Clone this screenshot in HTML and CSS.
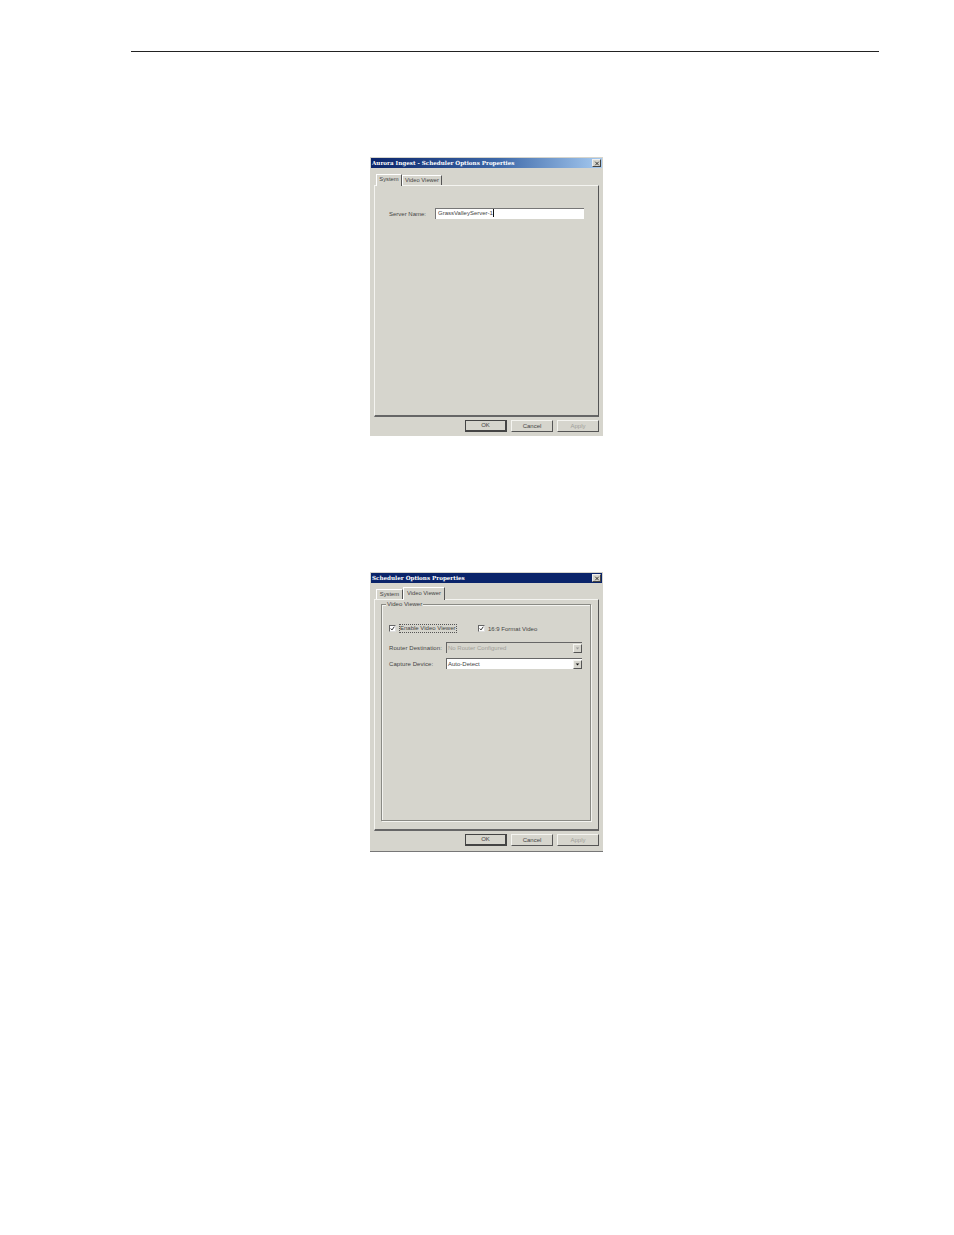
FILE: index.html
```html
<!DOCTYPE html>
<html lang="en">
<head>
<meta charset="utf-8">
<title>Scheduler Options Properties</title>
<link rel="stylesheet" href="styles.css">
</head>
<body>
<div class="rule"></div>

<section class="dialog first">
  <div class="titlebar gradient">
    <span class="title">Aurora Ingest - Scheduler Options Properties</span>
    <span class="close"><svg viewBox="0 0 8 7" width="8" height="7"><path d="M1.5 1 6.5 6M6.5 1 1.5 6" stroke="#222" stroke-width="1.2" fill="none"/></svg></span>
  </div>
  <div class="tabs tabs-a">
    <span class="tab active w-sys">System</span>
    <span class="tab w-vid">Video Viewer</span>
  </div>
  <div class="panel">
    <div class="server-row">
      <span class="label server-label">Server Name:</span>
      <span class="input server-input">GrassValleyServer-1<i class="caret"></i></span>
    </div>
  </div>
  <div class="buttons">
    <span class="btn default">OK</span>
    <span class="btn">Cancel</span>
    <span class="btn disabled">Apply</span>
  </div>
</section>

<section class="dialog second">
  <div class="titlebar navy">
    <span class="title">Scheduler Options Properties</span>
    <span class="close"><svg viewBox="0 0 8 7" width="8" height="7"><path d="M1.5 1 6.5 6M6.5 1 1.5 6" stroke="#222" stroke-width="1.2" fill="none"/></svg></span>
  </div>
  <div class="tabs tabs-b">
    <span class="tab w-sys2">System</span>
    <span class="tab active w-vid2">Video Viewer</span>
  </div>
  <div class="panel panel-b">
    <div class="group">
      <span class="legend">Video Viewer</span>
      <div class="checks">
        <span class="check focus"><i class="box"><svg viewBox="0 0 7 7" width="6" height="6"><path d="M1 3.5 2.8 5.5 6 1" stroke="#111" stroke-width="1.2" fill="none"/></svg></i><span class="focus-text">Enable Video Viewer</span></span>
        <span class="check"><i class="box"><svg viewBox="0 0 7 7" width="6" height="6"><path d="M1 3.5 2.8 5.5 6 1" stroke="#111" stroke-width="1.2" fill="none"/></svg></i>16:9 Format Video</span>
      </div>
      <div class="field">
        <span class="label field-label">Router Destination:</span>
        <span class="combo off"><span class="combo-text">No Router Configured</span><i class="arrow"><svg viewBox="0 0 7 4" width="6" height="4"><path d="M1 .5H6L3.5 3.5Z" fill="#999"/></svg></i></span>
      </div>
      <div class="field field-2">
        <span class="label field-label">Capture Device:</span>
        <span class="combo"><span class="combo-text">Auto-Detect</span><i class="arrow"><svg viewBox="0 0 7 4" width="6" height="4"><path d="M1 .5H6L3.5 3.5Z" fill="#111"/></svg></i></span>
      </div>
    </div>
  </div>
  <div class="buttons">
    <span class="btn default">OK</span>
    <span class="btn">Cancel</span>
    <span class="btn disabled">Apply</span>
  </div>
</section>
</body>
</html>
```
FILE: styles.css
```css
* { box-sizing: border-box; }
html, body { margin: 0; padding: 0; background: #fff; }
body {
  width: 954px;
  height: 1235px;
  overflow: hidden;
  font-family: "Liberation Sans", Arial, sans-serif;
  font-size: 6px;
  color: #444;
}
.rule { height: 1px; margin: 51px 75px 0 131px; background: #222; }

.dialog {
  width: 233px;
  margin-left: 370px;
  background: #d6d5cd;
  padding: 1px 0 0;
  display: flex;
  flex-direction: column;
}
.first { margin-top: 105px; height: 279px; }
.second { margin-top: 136px; height: 280px; border-bottom: 1px solid #777; }

.titlebar {
  height: 10px;
  margin: 0 1px;
  display: flex;
  align-items: center;
  justify-content: space-between;
  padding: 0 1px 0 1px;
  color: #fff;
}
.gradient { background: linear-gradient(90deg, #0a246a 0%, #3d68a8 55%, #a6caf0 100%); }
.navy { background: #0a246a; }
.title {
  font-family: "DejaVu Serif", "Liberation Serif", serif;
  font-size: 5.6px;
  font-weight: 700;
  line-height: 10px;
  white-space: nowrap;
}
.close {
  width: 9px;
  height: 8px;
  background: #d6d5cd;
  border: 1px solid;
  border-color: #eee #444 #444 #eee;
  display: flex;
  align-items: center;
  justify-content: center;
}
.close svg { width: 6px; height: 5px; }

.tabs {
  display: flex;
  align-items: flex-end;
  margin-left: 6px;
  position: relative;
  z-index: 1;
}
.tabs-a { height: 17px; }
.tabs-b { height: 16px; }
.tab {
  height: 10px;
  line-height: 9px;
  text-align: center;
  border-top: 1px solid #fff;
  border-left: 1px solid #fff;
  border-right: 1px solid #555;
  white-space: nowrap;
  font-size: 5.8px;
}
.tab.active {
  height: 12px;
  line-height: 9px;
  background: #d6d5cd;
  margin-bottom: -1px;
}
.tabs-b .tab { line-height: 8px; }
.tabs-b .tab.active { height: 13px; line-height: 10px; }
.w-sys { width: 26px; }
.w-vid { width: 40px; }
.w-sys2 { width: 27px; }
.w-vid2 { width: 42px; }

.panel {
  margin: 0 4px 0 4px;
  height: 232px;
  border: 1px solid;
  border-color: #f4f4f0 #555 #666 #f4f4f0;
  border-bottom-width: 2px;
  flex: none;
}
.server-row {
  display: flex;
  align-items: center;
  margin-top: 22px;
  padding-left: 14px;
}
.server-label { width: 46px; }
.input {
  width: 149px;
  height: 11px;
  background: #fff;
  border-top: 1px solid #777;
  border-left: 1px solid #777;
  padding-left: 2px;
  line-height: 9px;
  white-space: nowrap;
}
.caret {
  display: inline-block;
  width: 1px;
  height: 8px;
  background: #111;
  vertical-align: top;
}
.label { white-space: nowrap; }

.buttons {
  display: flex;
  gap: 4px;
  justify-content: flex-end;
  margin-top: 3px;
  padding-right: 4px;
}
.btn {
  width: 42px;
  height: 12px;
  line-height: 10px;
  text-align: center;
  border: 1px solid;
  border-color: #f4f4f0 #555 #555 #f4f4f0;
}
.btn.default { border-color: #444; border-width: 1px 2px 2px 1px; line-height: 9px; }
.btn.disabled { color: #a0a09a; }

.panel-b { padding: 4px 7px 0 6px; }
.group {
  height: 217px;
  border: 1px solid #8a8a84;
  box-shadow: 1px 1px 0 #f4f4f0, inset 1px 1px 0 #f4f4f0;
  position: relative;
  padding: 0 7px;
}
.legend {
  position: absolute;
  top: -4px;
  left: 4px;
  padding: 0 1px;
  background: #d6d5cd;
  line-height: 6px;
}
.checks {
  display: flex;
  margin-top: 19px;
  height: 9px;
  align-items: center;
}
.check { display: flex; align-items: center; gap: 3px; white-space: nowrap; }
.check.focus { width: 89px; gap: 4px; }
.focus-text { outline: 1px dotted #555; line-height: 7px; }
.box {
  width: 7px;
  height: 7px;
  background: #fff;
  border: 1px solid;
  border-color: #666 #ddd #ddd #666;
  display: flex;
  align-items: center;
  justify-content: center;
  flex: none;
}
.box svg { width: 5px; height: 5px; }
.field { display: flex; align-items: center; margin-top: 9px; height: 11px; }
.field-2 { margin-top: 5px; }
.field-label { width: 57px; flex: none; letter-spacing: .08px; }
.combo {
  width: 136px;
  height: 11px;
  background: #fff;
  border-top: 1px solid #666;
  border-left: 1px solid #666;
  display: flex;
  justify-content: space-between;
  align-items: center;
  padding: 0 0 0 1px;
}
.combo.off { background: #d6d5cd; color: #a0a09a; }
.arrow {
  width: 9px;
  height: 9px;
  background: #d6d5cd;
  border: 1px solid;
  border-color: #f4f4f0 #555 #555 #f4f4f0;
  display: flex;
  align-items: center;
  justify-content: center;
}
.arrow svg { width: 5px; height: 3px; }
```
